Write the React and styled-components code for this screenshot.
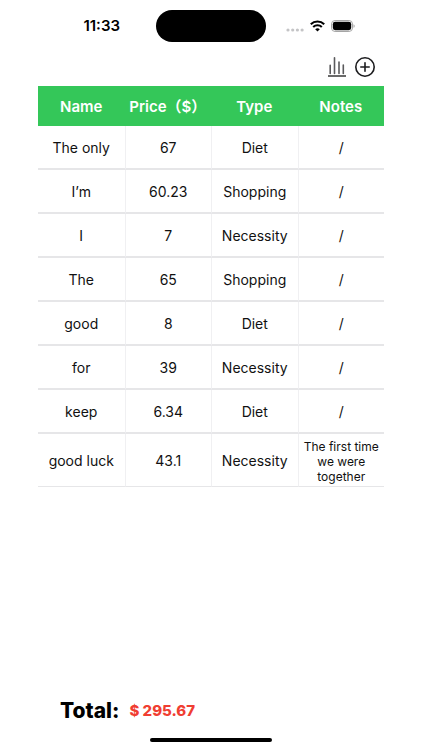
import React from 'react'
import styled, { createGlobalStyle } from 'styled-components';

const GlobalStyle = createGlobalStyle`
    * {
        box-sizing: border-box;
    }
    body {
        margin: 0;
        background: #fff;
        color: #111;
        font-family: Inter, "Noto Sans CJK SC", sans-serif;
        font-size: 15px;
    }
`

const Screen = styled.div`
    display: flex;
    flex-direction: column;
    min-height: 100vh;
`

const StatusBar = styled.header`
    display: grid;
    grid-template-columns: 1fr 110px 1fr;
    align-items: center;
    padding-top: 10px;
`

const Time = styled.time`
    padding-right: 36px;
    text-align: right;
    font-weight: 600;
    line-height: 20px;
    color: #000;
`

const Island = styled.div`
    height: 32px;
    border-radius: 16px;
    background: #000;
`

const StatusIcons = styled.div`
    display: flex;
    justify-content: flex-end;
    align-items: center;
    gap: 6px;
    padding-right: 67px;
`

const Toolbar = styled.nav`
    display: flex;
    justify-content: flex-end;
    gap: 7px;
    padding: 14px 46px 8px;
`

const IconButton = styled.button`
    display: flex;
    padding: 0;
    border: none;
    background: none;
    color: #1c1c1e;
    cursor: pointer;
`

const Main = styled.main`
    flex: 1;
    padding: 0 38px;
`

const Table = styled.table`
    width: 100%;
    table-layout: fixed;
    border-collapse: separate;
    border-spacing: 0;
    text-align: center;
`

const HeadCell = styled.th`
    height: 40px;
    padding: 2px 0 0;
    background: #34c759;
    color: #fff;
    font-weight: 600;
    line-height: 20px;
    white-space: nowrap;
`

const Cell = styled.td`
    height: ${props => props.$last ? '53px' : '44px'};
    padding: 2px 4px 0;
    border-bottom: ${props => props.$last ? '1px' : '2px'} solid #e6e6e8;
    font-size: ${props => props.$small ? '12px' : '14px'};
    line-height: ${props => props.$small ? '15px' : '20px'};

    & + & {
        border-left: 1px solid #f0f0f2;
    }
`

const Footer = styled.footer`
    display: flex;
    align-items: center;
    gap: 10px;
    padding: 0 60px 13px;
`

const TotalLabel = styled.span`
    color: #000;
    font-size: 21px;
    font-weight: 800;
    line-height: 28px;
`

const TotalPrice = styled.span`
    color: #f03e32;
    font-weight: 800;
    line-height: 20px;
`

const HomeIndicator = styled.div`
    width: 122px;
    height: 4px;
    margin: 0 auto 8px;
    border-radius: 2px;
    background: #000;
`

const columns = ['Name', 'Price（$）', 'Type', 'Notes']

const expenses = [
    { name: 'The only', price: 67, type: 'Diet' },
    { name: 'I’m', price: 60.23, type: 'Shopping' },
    { name: 'I', price: 7, type: 'Necessity' },
    { name: 'The', price: 65, type: 'Shopping' },
    { name: 'good', price: 8, type: 'Diet' },
    { name: 'for', price: 39, type: 'Necessity' },
    { name: 'keep', price: 6.34, type: 'Diet' },
    { name: 'good luck', price: 43.1, type: 'Necessity', notes: 'The first time we were together' },
]

const SignalIcon = () => (
    <svg width="18" height="13" viewBox="0 0 18 13" fill="#c4c4c6">
        <circle cx="2" cy="10" r="1.6" />
        <circle cx="6.7" cy="10" r="1.6" />
        <circle cx="11.4" cy="10" r="1.6" />
        <circle cx="16.1" cy="10" r="1.6" />
    </svg>
)

const WifiIcon = () => (
    <svg width="15" height="12" viewBox="0 0 15 12" fill="none" stroke="#000" strokeWidth="2.1">
        <path d="M0.8 4.2A9.5 9.5 0 0 1 14.2 4.2" />
        <path d="M3.2 7A6.1 6.1 0 0 1 11.8 7" />
        <path d="M7.5 11.6L5.2 9.3A3.3 3.3 0 0 1 9.8 9.3Z" fill="#000" stroke="none" />
    </svg>
)

const BatteryIcon = () => (
    <svg width="24" height="12" viewBox="0 0 24 12">
        <rect x="0.5" y="0.5" width="21" height="11" rx="3.6" fill="none" stroke="#a5a5a5" />
        <rect x="1.8" y="1.8" width="18.4" height="8.4" rx="2.4" fill="#000" />
        <path d="M22.6 4.2C23.9 4.7 23.9 7.3 22.6 7.8Z" fill="#8e8e8e" />
    </svg>
)

const ChartIcon = () => (
    <svg width="20" height="22" viewBox="0 0 20 22" fill="none" stroke="#5a5a5c" strokeWidth="1.6">
        <path d="M1 20H19" stroke="#444" />
        <path d="M3.2 17.5V9.3M7.5 17.5V1.8M12 17.5V6M16.3 17.5V9" strokeLinecap="round" />
    </svg>
)

const PlusIcon = () => (
    <svg width="22" height="22" viewBox="0 0 22 22" fill="none" stroke="currentColor" strokeWidth="1.6">
        <circle cx="11" cy="11" r="9.2" />
        <path d="M11 6.8V15.2M6.8 11H15.2" strokeLinecap="round" />
    </svg>
)

const App = () => {
    const total = expenses.reduce((sum, item) => sum + item.price, 0)

    return (
        <Screen>
            <GlobalStyle />
            <StatusBar>
                <Time>11:33</Time>
                <Island />
                <StatusIcons>
                    <SignalIcon />
                    <WifiIcon />
                    <BatteryIcon />
                </StatusIcons>
            </StatusBar>
            <Toolbar>
                <IconButton type="button" aria-label="Statistics"><ChartIcon /></IconButton>
                <IconButton type="button" aria-label="Add expense"><PlusIcon /></IconButton>
            </Toolbar>
            <Main>
                <Table>
                    <thead>
                        <tr>
                            {columns.map(column => <HeadCell key={column} scope="col">{column}</HeadCell>)}
                        </tr>
                    </thead>
                    <tbody>
                        {expenses.map((item, index) => {
                            const last = index === expenses.length - 1
                            return (
                                <tr key={item.name}>
                                    <Cell $last={last}>{item.name}</Cell>
                                    <Cell $last={last}>{item.price}</Cell>
                                    <Cell $last={last}>{item.type}</Cell>
                                    <Cell $last={last} $small={Boolean(item.notes)}>{item.notes || '/'}</Cell>
                                </tr>
                            )
                        })}
                    </tbody>
                </Table>
            </Main>
            <Footer>
                <TotalLabel>Total:</TotalLabel>
                <TotalPrice>$ {total.toFixed(2)}</TotalPrice>
            </Footer>
            <HomeIndicator />
        </Screen>
    )
}

export default App
